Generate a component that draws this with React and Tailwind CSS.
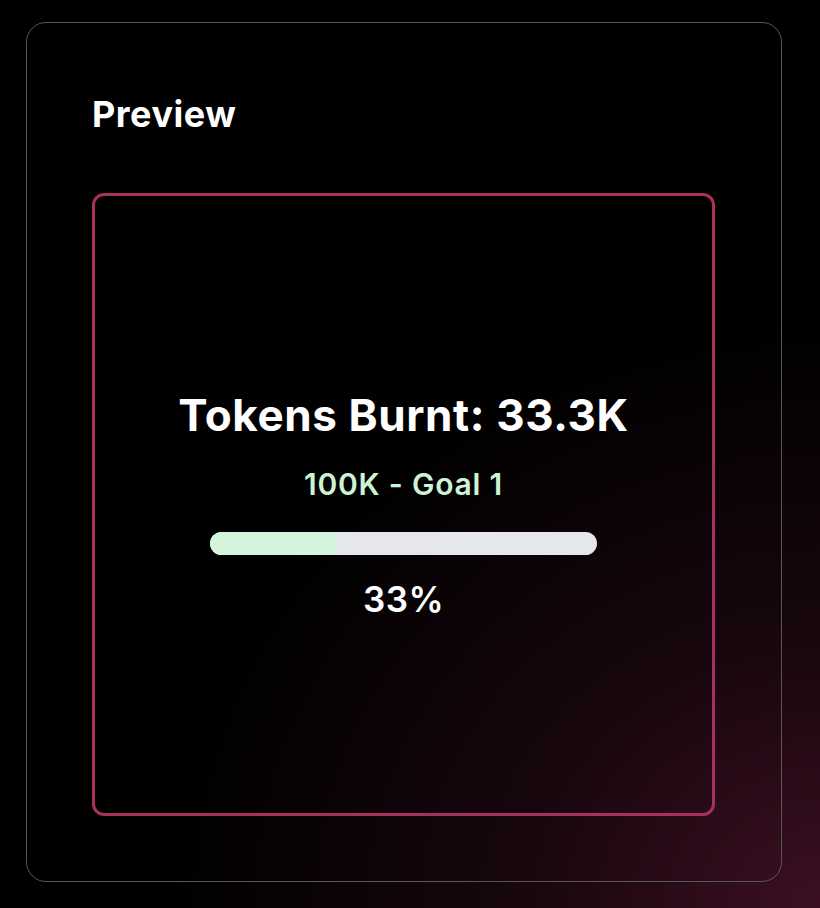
export default function App() {
  return (
    <div
      className="w-[820px] h-[908px] bg-black pl-[26px] pt-[22px] overflow-hidden"
      style={{
        fontFamily: "Inter, 'Noto Sans', sans-serif",
        backgroundImage:
          "radial-gradient(ellipse 80% 65% at 100% 100%, rgba(60,16,34,1) 0%, rgba(32,8,19,0.75) 45%, rgba(0,0,0,0) 100%)",
      }}
    >
      <div className="w-[756px] h-[860px] border border-[#575757] rounded-[20px] px-[65px] pt-[73px]">
        <h2 className="text-[36px] leading-none font-bold text-white tracking-[0.5px]">Preview</h2>
        <div className="mt-[61px] w-[623px] h-[623px] border-[3px] border-[#a8305f] rounded-xl flex flex-col items-center justify-center">
          <div className="text-[44px] leading-none font-bold text-white tracking-[0.6px]">Tokens Burnt: 33.3K</div>
          <div className="mt-[32px] text-[30px] leading-none font-semibold text-[#cdf3d6] tracking-[0.8px]">100K - Goal 1</div>
          <div className="mt-[33px] w-[387px] h-[23px] rounded-full bg-[#e5e7eb] overflow-hidden">
            <div className="h-full w-[33%] rounded-full bg-[#d3f5dc]" />
          </div>
          <div className="mt-[27px] text-[35px] leading-none font-semibold text-white tracking-[0.5px]">33%</div>
        </div>
      </div>
    </div>
  );
}
